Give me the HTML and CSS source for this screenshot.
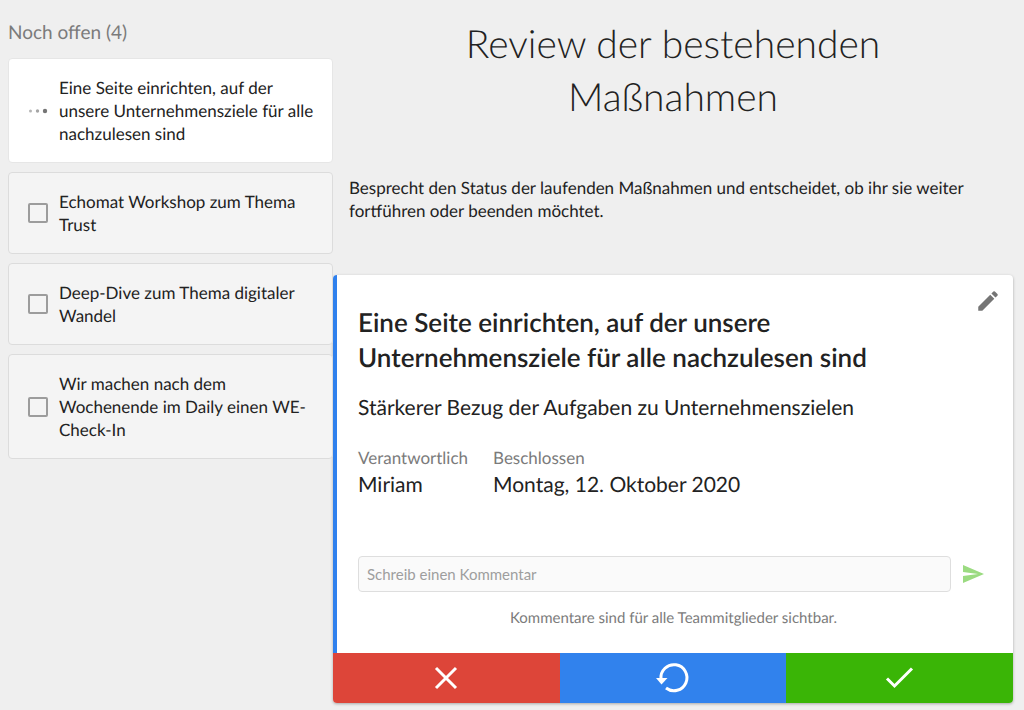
FILE: index.html
```html
<!DOCTYPE html>
<html lang="de">
<head>
<meta charset="utf-8">
<meta name="viewport" content="width=device-width, initial-scale=1">
<title>Review der bestehenden Maßnahmen</title>
<link rel="stylesheet" href="styles.css">
</head>
<body>
<div class="page">
  <aside class="sidebar">
    <h2 class="sidebar-title">Noch offen (4)</h2>
    <ul class="task-list">
      <li class="task task-active">
        <svg class="task-dots" viewBox="0 0 20 20" aria-hidden="true"><circle cx="2.5" cy="10" r="1.5" fill="#b5b5b5"/><circle cx="9.5" cy="10" r="1.7" fill="#a5a5a5"/><circle cx="17" cy="10" r="2.2" fill="#757575"/></svg>
        <span>Eine Seite einrichten, auf der unsere Unternehmensziele für alle nachzulesen sind</span>
      </li>
      <li><label class="task"><input class="task-check" type="checkbox"><span>Echomat Workshop zum Thema Trust</span></label></li>
      <li><label class="task"><input class="task-check" type="checkbox"><span>Deep-Dive zum Thema digitaler Wandel</span></label></li>
      <li><label class="task"><input class="task-check" type="checkbox"><span>Wir machen nach dem Wochenende im Daily einen WE-Check-In</span></label></li>
    </ul>
  </aside>
  <main class="main">
    <h1 class="title">Review der bestehenden Maßnahmen</h1>
    <p class="intro">Besprecht den Status der laufenden Maßnahmen und entscheidet, ob ihr sie weiter fortführen oder beenden möchtet.</p>
    <article class="detail">
      <div class="detail-body">
        <header class="detail-head">
          <h2 class="detail-title">Eine Seite einrichten, auf der unsere Unternehmensziele für alle nachzulesen sind</h2>
          <button class="icon-button edit" type="button" aria-label="Bearbeiten"><svg width="26" height="26" viewBox="0 0 24 24" fill="#757575"><path d="M3 17.25V21h3.75L17.81 9.94l-3.75-3.75L3 17.25zM20.71 7.04a1 1 0 0 0 0-1.41l-2.34-2.34a1 1 0 0 0-1.41 0l-1.83 1.83 3.75 3.75 1.83-1.83z"/></svg></button>
        </header>
        <p class="detail-text">Stärkerer Bezug der Aufgaben zu Unternehmenszielen</p>
        <dl class="facts">
          <div><dt>Verantwortlich</dt><dd>Miriam</dd></div>
          <div><dt>Beschlossen</dt><dd>Montag, 12. Oktober 2020</dd></div>
        </dl>
        <form class="comment">
          <input class="comment-input" type="text" placeholder="Schreib einen Kommentar" aria-label="Schreib einen Kommentar">
          <button class="icon-button" type="button" aria-label="Senden"><svg width="24" height="24" viewBox="0 0 24 24" fill="#9bdb81"><path d="M2 21L23 12L2 3v7l15 2l-15 2z"/></svg></button>
        </form>
        <p class="hint">Kommentare sind für alle Teammitglieder sichtbar.</p>
      </div>
      <div class="actions">
        <button class="action action-stop" type="button" aria-label="Beenden"><svg width="36" height="36" viewBox="0 0 36 36"><path d="M8 8L28 28M28 8L8 28"/></svg></button>
        <button class="action action-continue" type="button" aria-label="Fortführen"><svg width="36" height="36" viewBox="0 0 36 36"><path d="M6 19A13 13 0 1 1 11 28"/><path class="arrow" d="M1 18H12.500L6.500 24.500z"/></svg></button>
        <button class="action action-done" type="button" aria-label="Erledigt"><svg width="36" height="36" viewBox="0 0 36 36"><path d="M5 18.500L12.500 26L30 8.500"/></svg></button>
      </div>
    </article>
  </main>
</div>
</body>
</html>
```
FILE: styles.css
```css
* { box-sizing: border-box; }

body {
  margin: 0;
  background: #efefef;
  color: #222;
  font: 17px/23px Lato, "Liberation Sans", sans-serif;
  text-rendering: geometricPrecision;
}

h1, h2, p, ul, dl, dd { margin: 0; padding: 0; }
ul { list-style: none; }
button { border: 0; padding: 0; background: none; cursor: pointer; }
svg { display: block; }

.page {
  display: grid;
  grid-template-columns: 325fr 680fr;
  padding: 0 11px 7px 8px;
}

.sidebar { position: relative; z-index: 1; padding-top: 20px; }

.sidebar-title {
  margin-bottom: 12px;
  color: #7b7b7b;
  font-size: 19px;
  font-weight: 400;
  line-height: 26px;
}

.task-list { display: grid; gap: 9px; }

.task {
  display: flex;
  align-items: center;
  gap: 11px;
  padding: 17px 12px 17px 19px;
  border: 1px solid #dcdcdc;
  border-radius: 4px;
  background: #f4f4f4;
}

.task-active { border-color: #e6e6e6; background: #fff; }

.task-dots { flex: none; width: 20px; height: 20px; }

.task-check {
  appearance: none;
  flex: none;
  width: 20px;
  height: 20px;
  margin: 0;
  border: 2px solid #9c9c9c;
  border-radius: 2px;
}

.title {
  padding: 18px 80px 0;
  font-size: 39px;
  font-weight: 300;
  line-height: 53px;
  text-align: center;
}

.intro { padding: 52px 16px 53px; }

.detail {
  overflow: hidden;
  border-radius: 4px;
  background: #fff;
  box-shadow: 0 1px 3px rgba(0, 0, 0, 0.3);
}

.detail-body {
  padding: 13px 28px 23px 21px;
  border-left: 4px solid #2f80ed;
}

.detail-head {
  display: flex;
  justify-content: space-between;
  align-items: flex-start;
  gap: 24px;
}

.detail-title {
  padding-top: 17px;
  max-width: 540px;
  font-size: 26px;
  font-weight: 600;
  line-height: 35px;
}

.icon-button { flex: none; }
.edit { margin-right: -16px; }

.detail-text { padding-top: 19px; font-size: 21px; line-height: 28px; }

.facts { display: flex; gap: 25px; padding-top: 24px; }
.facts dt { color: #7b7b7b; }
.facts dd { font-size: 21px; line-height: 31px; }

.comment {
  display: flex;
  align-items: center;
  gap: 10px;
  padding-top: 56px;
}

.comment-input {
  flex: 1;
  min-width: 0;
  height: 36px;
  padding: 0 8px;
  border: 1px solid #dedede;
  border-radius: 4px;
  background: #fafafa;
  color: #222;
  font: 15px/20px Lato, sans-serif;
}

.comment-input::placeholder { color: #9e9e9e; }

.hint {
  padding: 15px 0 0 4px;
  color: #7b7b7b;
  font-size: 15px;
  text-align: center;
}

.actions { display: grid; grid-template-columns: repeat(3, 1fr); }

.action { display: grid; place-items: center; height: 50px; }
.action path { fill: none; stroke: #fff; stroke-width: 3; }
.action .arrow { fill: #fff; stroke: none; }
.action-stop { background: #dd4539; }
.action-continue { background: #3182ed; }
.action-done { background: #3ab506; }
```
